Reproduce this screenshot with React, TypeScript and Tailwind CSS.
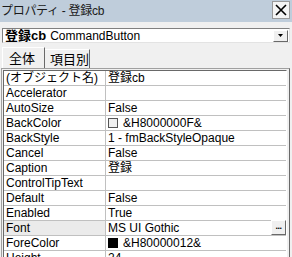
import React from "react";

type Row = {
  name: string;
  value: string;
  swatch?: "white" | "black";
  dots?: boolean;
  selected?: boolean;
};

const rows: Row[] = [
  { name: "(オブジェクト名)", value: "登録cb" },
  { name: "Accelerator", value: "" },
  { name: "AutoSize", value: "False" },
  { name: "BackColor", value: "&H8000000F&", swatch: "white" },
  { name: "BackStyle", value: "1 - fmBackStyleOpaque" },
  { name: "Cancel", value: "False" },
  { name: "Caption", value: "登録" },
  { name: "ControlTipText", value: "" },
  { name: "Default", value: "False" },
  { name: "Enabled", value: "True" },
  { name: "Font", value: "MS UI Gothic", dots: true, selected: true },
  { name: "ForeColor", value: "&H80000012&", swatch: "black" },
  { name: "Height", value: "24" },
];

const font = { fontFamily: '"Liberation Sans", "Noto Sans CJK JP", sans-serif' };

export default function App() {
  return (
    <div
      className="w-[292px] h-[257px] overflow-hidden bg-[#f0f0f0] text-[12px] leading-none text-black"
      style={font}
    >
      {/* title bar */}
      <div className="h-[22px] bg-[#bfcddb] flex items-center justify-between pl-[1px] pr-[2px]">
        <span className="text-[12px] text-[#1a1a1a] tracking-[-0.3px]">プロパティ - 登録cb</span>
        <div className="w-[18px] h-[18px] mt-[-2px] bg-[#f4f4f4] border border-[#9a9a9a] flex items-center justify-center">
          <svg width="12" height="12" viewBox="0 0 12 12">
            <path d="M1 1 L11 11 M11 1 L1 11" stroke="#000" strokeWidth="1.6" />
          </svg>
        </div>
      </div>

      {/* object combo */}
      <div className="mt-[6px] mx-[2px] h-[15px] bg-white border-t border-l border-[#808080] border-r border-b border-r-[#e3e3e3] border-b-[#e3e3e3] flex items-center">
        <span className="pl-[2px] font-bold text-[13px]">登録cb</span>
        <span className="pl-[4px] text-[12px]">CommandButton</span>
        <div className="ml-auto mr-[1px] w-[15px] h-[12px] bg-[#f0f0f0] border-r border-b border-[#696969] border-t border-l border-t-white border-l-white flex items-center justify-center">
          <svg width="5" height="3" viewBox="0 0 5 3">
            <path d="M0 0 H5 L2.5 3 Z" fill="#000" />
          </svg>
        </div>
      </div>

      {/* tabs */}
      <div className="mt-[4px] h-[21px] flex items-end pl-[2px]">
        <div className="h-[21px] w-[43px] border-t border-l border-r border-t-white border-l-white border-r-[#696969] flex items-center pl-[6px] text-[13px]">
          全体
        </div>
        <div className="h-[19px] w-[45px] border-t border-r border-t-white border-r-[#696969] flex items-center pl-[5px] text-[13px]">
          項目別
        </div>
      </div>

      {/* property grid */}
      <div className="ml-[1px] w-[289px] border-t border-l border-t-[#a0a0a0] border-l-[#a0a0a0] border-r border-r-[#696969]">
        <div className="ml-[1px] mr-[2px] mt-[1px] border-t border-l border-[#696969] border-r border-r-white bg-white">
          {rows.map((r) => (
            <div key={r.name} className="h-[15px] grid grid-cols-[102px_1fr] border-b border-[#c0c0c0]">
              <div
                className={`border-r border-[#c0c0c0] pl-[2px] flex items-center ${
                  r.selected ? "bg-[#ebebeb]" : "bg-white"
                }`}
              >
                {r.name}
              </div>
              <div className="flex items-center pl-[2px] relative">
                {r.swatch === "white" && (
                  <span className="w-[10px] h-[10px] mr-[5px] border border-[#555] bg-[#f0f0f0]" />
                )}
                {r.swatch === "black" && (
                  <span className="w-[10px] h-[10px] mr-[5px] bg-black" />
                )}
                {r.value}
                {r.dots && (
                  <div className="absolute right-0 top-[-1px] w-[15px] h-[15px] bg-[#f0f0f0] border-t border-l border-t-white border-l-white border-r border-b border-[#696969] flex items-end justify-center pb-[3px]">
                    <span className="text-[9px] font-bold leading-none tracking-[-0.5px]">...</span>
                  </div>
                )}
              </div>
            </div>
          ))}
        </div>
      </div>
    </div>
  );
}
